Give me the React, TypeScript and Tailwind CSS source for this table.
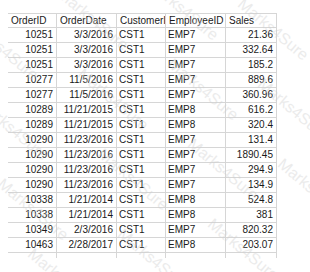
import React from "react";

type Row = [string, string, string, string, string];

const rows: Row[] = [
  ["10251", "3/3/2016", "CST1", "EMP7", "21.36"],
  ["10251", "3/3/2016", "CST1", "EMP7", "332.64"],
  ["10251", "3/3/2016", "CST1", "EMP7", "185.2"],
  ["10277", "11/5/2016", "CST1", "EMP7", "889.6"],
  ["10277", "11/5/2016", "CST1", "EMP7", "360.96"],
  ["10289", "11/21/2015", "CST1", "EMP8", "616.2"],
  ["10289", "11/21/2015", "CST1", "EMP8", "320.4"],
  ["10290", "11/23/2016", "CST1", "EMP7", "131.4"],
  ["10290", "11/23/2016", "CST1", "EMP7", "1890.45"],
  ["10290", "11/23/2016", "CST1", "EMP7", "294.9"],
  ["10290", "11/23/2016", "CST1", "EMP7", "134.9"],
  ["10338", "1/21/2014", "CST1", "EMP8", "524.8"],
  ["10338", "1/21/2014", "CST1", "EMP8", "381"],
  ["10349", "2/3/2016", "CST1", "EMP7", "820.32"],
  ["10463", "2/28/2017", "CST1", "EMP8", "203.07"],
];

const headers = ["OrderID", "OrderDate", "CustomerI", "EmployeeID", "Sales"];
// which columns are right aligned
const rightAligned = [true, true, false, false, true];

// watermark spots (left, top)
const marks: [number, number][] = [
  [-30, 10], [60, -20], [150, -30], [240, -10],
  [-20, 90], [80, 60], [170, 50], [260, 70],
  [0, 170], [100, 140], [190, 130], [280, 150],
  [30, 240], [120, 220], [210, 210],
];

export default function App() {
  return (
    <div
      className="relative w-[310px] h-[272px] overflow-hidden bg-white text-[#1a1a1a]"
      style={{ fontFamily: "'Liberation Sans', Arial, sans-serif" }}
    >
      <div className="pt-[13px] pl-[8px]">
        <div className="grid grid-cols-[49px_60px_49px_60px_51px] text-[10px] leading-none">
          {headers.map((h) => (
            <div
              key={h}
              className="h-[15px] border-t border-b border-r border-[#d6d6d6] flex items-center pl-[3px] overflow-hidden whitespace-nowrap"
            >
              {h}
            </div>
          ))}
          {rows.map((r, ri) =>
            r.map((c, ci) => (
              <div
                key={`${ri}-${ci}`}
                className={
                  "h-[15px] border-b border-r border-[#d6d6d6] flex items-center overflow-hidden whitespace-nowrap " +
                  (rightAligned[ci] ? "justify-end pr-[3px]" : "pl-[2px]")
                }
              >
                {c}
              </div>
            ))
          )}
          {headers.map((h) => (
            <div key={`tail-${h}`} className="h-[5px] border-r border-[#d6d6d6]" />
          ))}
        </div>
      </div>

      {/* watermark overlay */}
      <div className="absolute inset-0 pointer-events-none">
        {marks.map(([x, y], i) => (
          <span
            key={i}
            className="absolute text-[16px] text-[#cfcfcf] opacity-40 rotate-[40deg] origin-left whitespace-nowrap"
            style={{ left: x, top: y }}
          >
            Marks4Sure
          </span>
        ))}
      </div>
    </div>
  );
}
